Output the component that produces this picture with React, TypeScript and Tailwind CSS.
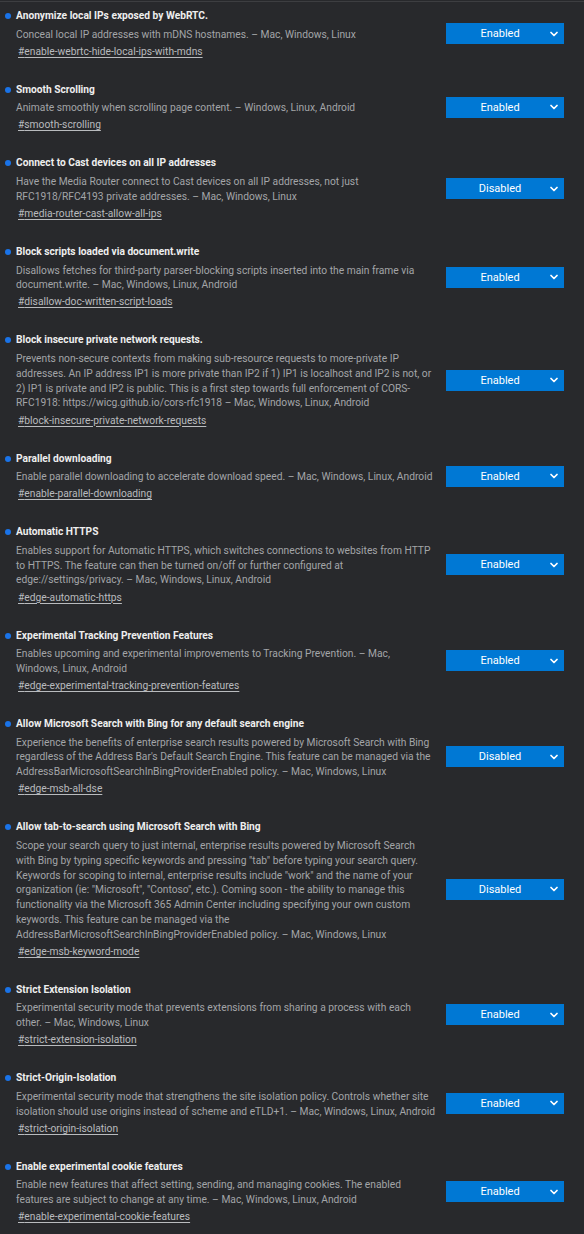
import { ChevronDown } from "lucide-react";

interface Flag {
  title: string;
  lines: string[];
  id: string;
  state: "Enabled" | "Disabled";
}

const flags: Flag[] = [
  {
    title: "Anonymize local IPs exposed by WebRTC.",
    lines: ["Conceal local IP addresses with mDNS hostnames. – Mac, Windows, Linux"],
    id: "enable-webrtc-hide-local-ips-with-mdns",
    state: "Enabled",
  },
  {
    title: "Smooth Scrolling",
    lines: ["Animate smoothly when scrolling page content. – Windows, Linux, Android"],
    id: "smooth-scrolling",
    state: "Enabled",
  },
  {
    title: "Connect to Cast devices on all IP addresses",
    lines: [
      "Have the Media Router connect to Cast devices on all IP addresses, not just",
      "RFC1918/RFC4193 private addresses. – Mac, Windows, Linux",
    ],
    id: "media-router-cast-allow-all-ips",
    state: "Disabled",
  },
  {
    title: "Block scripts loaded via document.write",
    lines: [
      "Disallows fetches for third-party parser-blocking scripts inserted into the main frame via",
      "document.write. – Mac, Windows, Linux, Android",
    ],
    id: "disallow-doc-written-script-loads",
    state: "Enabled",
  },
  {
    title: "Block insecure private network requests.",
    lines: [
      "Prevents non-secure contexts from making sub-resource requests to more-private IP",
      "addresses. An IP address IP1 is more private than IP2 if 1) IP1 is localhost and IP2 is not, or",
      "2) IP1 is private and IP2 is public. This is a first step towards full enforcement of CORS-",
      "RFC1918: https://wicg.github.io/cors-rfc1918 – Mac, Windows, Linux, Android",
    ],
    id: "block-insecure-private-network-requests",
    state: "Enabled",
  },
  {
    title: "Parallel downloading",
    lines: ["Enable parallel downloading to accelerate download speed. – Mac, Windows, Linux, Android"],
    id: "enable-parallel-downloading",
    state: "Enabled",
  },
  {
    title: "Automatic HTTPS",
    lines: [
      "Enables support for Automatic HTTPS, which switches connections to websites from HTTP",
      "to HTTPS. The feature can then be turned on/off or further configured at",
      "edge://settings/privacy. – Mac, Windows, Linux, Android",
    ],
    id: "edge-automatic-https",
    state: "Enabled",
  },
  {
    title: "Experimental Tracking Prevention Features",
    lines: [
      "Enables upcoming and experimental improvements to Tracking Prevention. – Mac,",
      "Windows, Linux, Android",
    ],
    id: "edge-experimental-tracking-prevention-features",
    state: "Enabled",
  },
  {
    title: "Allow Microsoft Search with Bing for any default search engine",
    lines: [
      "Experience the benefits of enterprise search results powered by Microsoft Search with Bing",
      "regardless of the Address Bar's Default Search Engine. This feature can be managed via the",
      "AddressBarMicrosoftSearchInBingProviderEnabled policy. – Mac, Windows, Linux",
    ],
    id: "edge-msb-all-dse",
    state: "Disabled",
  },
  {
    title: "Allow tab-to-search using Microsoft Search with Bing",
    lines: [
      "Scope your search query to just internal, enterprise results powered by Microsoft Search",
      'with Bing by typing specific keywords and pressing "tab" before typing your search query.',
      'Keywords for scoping to internal, enterprise results include "work" and the name of your',
      'organization (ie: "Microsoft", "Contoso", etc.). Coming soon - the ability to manage this',
      "functionality via the Microsoft 365 Admin Center including specifying your own custom",
      "keywords. This feature can be managed via the",
      "AddressBarMicrosoftSearchInBingProviderEnabled policy. – Mac, Windows, Linux",
    ],
    id: "edge-msb-keyword-mode",
    state: "Disabled",
  },
  {
    title: "Strict Extension Isolation",
    lines: [
      "Experimental security mode that prevents extensions from sharing a process with each",
      "other. – Mac, Windows, Linux",
    ],
    id: "strict-extension-isolation",
    state: "Enabled",
  },
  {
    title: "Strict-Origin-Isolation",
    lines: [
      "Experimental security mode that strengthens the site isolation policy. Controls whether site",
      "isolation should use origins instead of scheme and eTLD+1. – Mac, Windows, Linux, Android",
    ],
    id: "strict-origin-isolation",
    state: "Enabled",
  },
  {
    title: "Enable experimental cookie features",
    lines: [
      "Enable new features that affect setting, sending, and managing cookies. The enabled",
      "features are subject to change at any time. – Mac, Windows, Linux, Android",
    ],
    id: "enable-experimental-cookie-features",
    state: "Enabled",
  },
];

function FlagRow({ flag }: { flag: Flag }) {
  return (
    <div className="flex items-center">
      <div className="min-w-0 flex-1 pl-[5px]">
        <div className="flex items-center">
          <span className="mr-[5px] h-[6px] w-[6px] shrink-0 rounded-full bg-[#1a73e8]" />
          <h3 className="whitespace-nowrap text-[10.2px] font-bold leading-[16px] text-[#eeeeee]">
            {flag.title}
          </h3>
        </div>
        <p className="mt-[3.67px] pl-[11px] text-[10.25px] leading-[14.8px] text-[#a3a5a8]">
          {flag.lines.map((line) => (
            <span key={line} className="block whitespace-nowrap">
              {line}
            </span>
          ))}
        </p>
        <a
          href={`#${flag.id}`}
          className="mt-[2.33px] ml-[13px] block w-fit text-[10.25px] leading-[14.67px] text-[#b9bbbe] underline underline-offset-2"
        >
          #{flag.id}
        </a>
      </div>
      <div className="mr-[20px] flex h-[21px] w-[118px] shrink-0 items-center bg-[#0078d4] text-white">
        <span className="flex-1 pl-[6px] text-center text-[11px] leading-none">{flag.state}</span>
        <ChevronDown className="mr-[4px] h-[12px] w-[12px]" strokeWidth={3.5} aria-hidden />
      </div>
    </div>
  );
}

export default function App() {
  return (
    <div
      className="min-h-[1234px] w-[584px] bg-[#28292c]"
      style={{ fontFamily: "Roboto, 'Liberation Sans', sans-serif" }}
    >
      <div className="h-px" />
      <div className="h-px bg-[#3d3e41]" />
      <div className="flex flex-col gap-[22.25px] pt-[6px]">
        {flags.map((flag) => (
          <FlagRow key={flag.id} flag={flag} />
        ))}
      </div>
    </div>
  );
}
